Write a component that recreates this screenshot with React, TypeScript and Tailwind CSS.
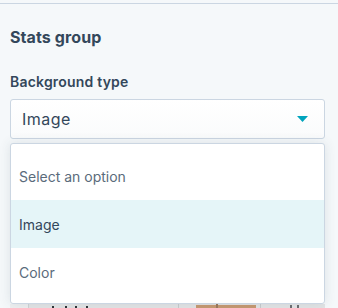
export default function App() {
  const options = ["Select an option", "Image", "Color"];
  return (
    <div className="w-[338px] h-[308px] overflow-hidden bg-[#f5f8fa] font-['Inter',sans-serif] text-[#33475b]">
      <div className="mt-[3px] border-t border-[#cbd6e2]" />
      <div className="px-[10px]">
        <h2 className="mt-[21px] text-[16px] leading-[24px] font-bold tracking-[0.1px]">Stats group</h2>
        <label className="mt-[23px] block text-[14px] leading-[20px] font-semibold tracking-[0.2px]">Background type</label>
        <div className="relative mt-[7px]">
          <button className="flex h-[40px] w-[315px] items-center justify-between rounded-[3px] border border-[#cbd6e2] bg-gradient-to-b from-white to-[#fafbfc] pl-[11px] pr-[16px] text-[16px] tracking-[0.5px]">
            <span>Image</span>
            <svg width="11" height="6" viewBox="0 0 11 6">
              <path d="M0 0 H11 L5.5 6 Z" fill="#00a4bd" />
            </svg>
          </button>
          <ul className="absolute left-0 top-[44px] z-10 h-[161px] w-[315px] rounded-[3px] border border-[#cbd6e2] bg-white pt-[8px] shadow-[0_0_12px_rgba(45,62,80,0.12)]">
            {options.map((o) => (
              <li
                key={o}
                className={`flex h-[48px] items-center pl-[8px] text-[14px] ${o === "Image" ? "bg-[#e5f5f8] text-[#33475b]" : "text-[#5a6b7b]"}`}
              >
                {o}
              </li>
            ))}
          </ul>
          <div className="mt-[165px] h-[40px] w-[315px] bg-[#e3e5e6]">
            <svg width="315" height="40" viewBox="0 0 315 40">
              <rect x="0" y="0" width="18" height="40" fill="#eef0f1" />
              <rect x="18" y="0" width="1" height="40" fill="#d0d4d6" />
              <rect x="42" y="2" width="2" height="38" fill="#2f3337" />
              <rect x="55" y="2" width="2" height="38" fill="#2f3337" />
              <rect x="65" y="2" width="2" height="38" fill="#2f3337" />
              <rect x="76" y="2" width="2" height="38" fill="#2f3337" />
              <rect x="168" y="0" width="1" height="40" fill="#c8ccce" />
              <rect x="186" y="1" width="60" height="39" fill="#c79a72" />
              <rect x="206" y="0" width="2" height="40" fill="#9d7a5e" />
              <rect x="250" y="0" width="1" height="40" fill="#c8ccce" />
              <rect x="280" y="1" width="2" height="39" fill="#6d6f72" />
              <rect x="287" y="1" width="2" height="39" fill="#6d6f72" />
            </svg>
          </div>
        </div>
      </div>
    </div>
  );
}
